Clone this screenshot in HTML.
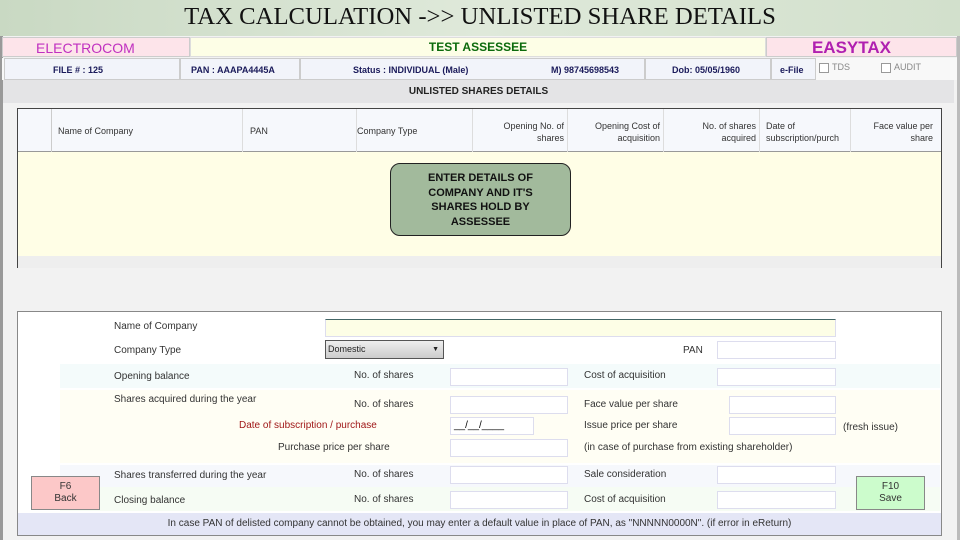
<!DOCTYPE html>
<html><head><style>
*{margin:0;padding:0;box-sizing:border-box}
body{width:960px;height:540px;overflow:hidden;background:#f2f2f2;font-family:"Liberation Sans",Arial,sans-serif;position:relative}
.a{position:absolute}
.t{position:absolute;font-size:10px;color:#333;white-space:nowrap}
.inp{position:absolute;background:#fff;border:1px solid #dde;}
</style></head><body>
<div class="a" style="left:0;top:0;width:960px;height:36px;background:linear-gradient(90deg,#c9d9c3,#dfe9da 50%,#d2e0cc)"></div>
<div class="a" style="left:0;top:4px;width:960px;text-align:center;font-family:'Liberation Serif',serif;font-size:24px;color:#111;transform:scaleX(1.03)">TAX CALCULATION -&gt;&gt; UNLISTED SHARE DETAILS</div>
<div class="a" style="left:0;top:36px;width:960px;height:504px;background:#f2f2f2;border-left:3px solid #999;border-right:3px solid #bbb"></div>
<div class="a" style="left:2px;top:37px;width:188px;height:20px;background:#fde4ea;border:1px solid #ccc;color:#c030c0;font-size:14px;padding:2px 0 0 33px">ELECTROCOM</div>
<div class="a" style="left:190px;top:37px;width:576px;height:20px;background:#fdfee6;border:1px solid #ddd;color:#0b6a0b;font-size:12px;font-weight:bold;text-align:center;padding-top:2px">TEST ASSESSEE</div>
<div class="a" style="left:766px;top:37px;width:191px;height:20px;background:#fde4ea;border:1px solid #ccc;color:#b020b0;font-size:17px;font-weight:bold;text-align:center;padding-right:20px">EASYTAX</div>
<div class="a" style="left:2px;top:58px;width:955px;height:22px;background:#f8f8f8"></div>
<div class="a" style="left:4px;top:58px;width:950px;height:22px;font-size:9px;font-weight:bold;color:#1a1a5a;">
<div class="a" style="left:0;width:176px;height:22px;border:1px solid #ccc;background:#f2f4fa;padding:6px 0 0 48px">FILE # : 125</div>
<div class="a" style="left:176px;width:120px;height:22px;border:1px solid #ccc;background:#f2f4fa;padding:6px 0 0 10px">PAN : AAAPA4445A</div>
<div class="a" style="left:296px;width:345px;height:22px;border:1px solid #ccc;background:#f2f4fa;padding:6px 0 0 52px">Status : INDIVIDUAL (Male)<span style="position:absolute;left:250px">M) 98745698543</span></div>
<div class="a" style="left:641px;width:126px;height:22px;border:1px solid #ccc;background:#f2f4fa;padding:6px 0 0 26px">Dob: 05/05/1960</div>
<div class="a" style="left:767px;width:45px;height:22px;border:1px solid #ccc;background:#f2f4fa;padding:6px 0 0 8px">e-File</div>
<div class="a" style="left:815px;top:5px;width:10px;height:10px;border:1px solid #999;background:#fff"></div><div class="a" style="left:828px;top:4px;font-weight:normal;color:#888">TDS</div>
<div class="a" style="left:877px;top:5px;width:10px;height:10px;border:1px solid #999;background:#fff"></div><div class="a" style="left:890px;top:4px;font-weight:normal;color:#888">AUDIT</div>
</div>
<div class="a" style="left:3px;top:80px;width:951px;height:23px;background:#e4e4e6;font-size:10px;font-weight:bold;color:#222;text-align:center;padding-top:6px">UNLISTED SHARES DETAILS</div>
<div class="a" style="left:17px;top:108px;width:925px;height:160px;border:1px solid #444;border-bottom:none;background:#fffee6">
<div class="a" style="left:0;top:0;width:923px;height:43px;background:#f6f8fc;border-bottom:1px solid #999;font-size:9px;color:#333">
<div class="a" style="left:0;top:0;width:34px;height:43px;border-right:1px solid #ccc"></div>
<div class="a" style="left:34px;top:0;width:191px;height:43px;border-right:1px solid #ddd;padding:17px 0 0 6px">Name of Company</div>
<div class="a" style="left:225px;top:0;width:114px;height:43px;border-right:1px solid #ddd;padding:17px 0 0 7px">PAN</div>
<div class="a" style="left:339px;top:0;width:116px;height:43px;border-right:1px solid #ddd;padding:17px 0 0 0">Company Type</div>
<div class="a" style="left:455px;top:0;width:95px;height:43px;border-right:1px solid #ddd;padding:11px 3px 0 0;text-align:right;line-height:12px">Opening No. of<br>shares</div>
<div class="a" style="left:550px;top:0;width:96px;height:43px;border-right:1px solid #ddd;padding:11px 3px 0 0;text-align:right;line-height:12px">Opening Cost of<br>acquisition</div>
<div class="a" style="left:646px;top:0;width:96px;height:43px;border-right:1px solid #ddd;padding:11px 3px 0 0;text-align:right;line-height:12px">No. of shares<br>acquired</div>
<div class="a" style="left:742px;top:0;width:91px;height:43px;border-right:1px solid #ddd;padding:11px 0 0 6px;line-height:12px;overflow:hidden">Date of<br>subscription/purch</div>
<div class="a" style="left:833px;top:0;width:90px;height:43px;padding:11px 8px 0 0;text-align:right;line-height:12px">Face value per<br>share</div>
</div>
<div class="a" style="left:372px;top:54px;width:181px;height:73px;background:#a2ba9c;border:1px solid #222;border-radius:10px;font-size:11px;font-weight:bold;text-align:center;color:#111;padding-top:7px;line-height:14.5px">ENTER DETAILS OF<br>COMPANY AND IT'S<br>SHARES HOLD BY<br>ASSESSEE</div>
<div class="a" style="left:0;top:147px;width:923px;height:12px;background:#eeeeee"></div>
</div>
<div class="a" style="left:17px;top:311px;width:925px;height:225px;border:1px solid #888;background:#fff"></div>
<div class="a" style="left:60px;top:364px;width:880px;height:24px;background:#f4fbfb"></div>
<div class="a" style="left:60px;top:390px;width:880px;height:73px;background:#fffef4"></div>
<div class="a" style="left:60px;top:465px;width:880px;height:22px;background:#f6f8fc"></div>
<div class="a" style="left:60px;top:487px;width:880px;height:24px;background:#f6fcf4"></div>
<div class="a" style="left:18px;top:513px;width:923px;height:22px;background:#e4e6f6;font-size:10px;color:#333;text-align:center;padding-top:5px">In case PAN of delisted company cannot be obtained, you may enter a default value in place of PAN, as "NNNNN0000N". (if error in eReturn)</div>
<div class="t" style="left:114px;top:321px">Name of Company</div>
<div class="inp" style="left:325px;top:319px;width:511px;height:18px;background:#fdfee6;border-top:1px solid #466"></div>
<div class="t" style="left:114px;top:345px">Company Type</div>
<div class="a" style="left:325px;top:340px;width:119px;height:19px;border:1px solid #555;background:linear-gradient(#eee,#ccc);font-size:9px;padding:3px 0 0 2px;color:#222">Domestic<span style="position:absolute;right:4px;font-size:7px;top:5px">▼</span></div>
<div class="t" style="left:683px;top:345px">PAN</div>
<div class="inp" style="left:717px;top:341px;width:119px;height:18px"></div>
<div class="t" style="left:114px;top:371px">Opening balance</div>
<div class="t" style="left:354px;top:370px">No. of shares</div>
<div class="inp" style="left:450px;top:368px;width:118px;height:18px"></div>
<div class="t" style="left:584px;top:370px">Cost of acquisition</div>
<div class="inp" style="left:717px;top:368px;width:119px;height:18px"></div>
<div class="t" style="left:114px;top:394px">Shares acquired during the year</div>
<div class="t" style="left:354px;top:399px">No. of shares</div>
<div class="inp" style="left:450px;top:396px;width:118px;height:18px"></div>
<div class="t" style="left:584px;top:399px">Face value per share</div>
<div class="inp" style="left:729px;top:396px;width:107px;height:18px"></div>
<div class="t" style="left:239px;top:420px;color:#a01818">Date of subscription / purchase</div>
<div class="inp" style="left:450px;top:417px;width:84px;height:18px;font-size:10px;padding:2px 0 0 3px">__/__/____</div>
<div class="t" style="left:584px;top:420px">Issue price per share</div>
<div class="inp" style="left:729px;top:417px;width:107px;height:18px"></div>
<div class="t" style="left:843px;top:422px">(fresh issue)</div>
<div class="t" style="left:278px;top:442px">Purchase price per share</div>
<div class="inp" style="left:450px;top:439px;width:118px;height:18px"></div>
<div class="t" style="left:584px;top:442px">(in case of purchase from existing shareholder)</div>
<div class="t" style="left:114px;top:470px">Shares transferred during the year</div>
<div class="t" style="left:354px;top:469px">No. of shares</div>
<div class="inp" style="left:450px;top:466px;width:118px;height:18px"></div>
<div class="t" style="left:584px;top:469px">Sale consideration</div>
<div class="inp" style="left:717px;top:466px;width:119px;height:18px"></div>
<div class="t" style="left:114px;top:495px">Closing balance</div>
<div class="t" style="left:354px;top:494px">No. of shares</div>
<div class="inp" style="left:450px;top:491px;width:118px;height:18px"></div>
<div class="t" style="left:584px;top:494px">Cost of acquisition</div>
<div class="inp" style="left:717px;top:491px;width:119px;height:18px"></div>
<div class="a" style="left:31px;top:476px;width:69px;height:34px;background:#fcc8c8;border:1px solid #888;font-size:10px;text-align:center;padding-top:4px;line-height:12px;color:#333">F6<br>Back</div>
<div class="a" style="left:856px;top:476px;width:69px;height:34px;background:#ccfccc;border:1px solid #888;font-size:10px;text-align:center;padding-top:4px;line-height:12px;color:#333">F10<br>Save</div>
</body></html>
